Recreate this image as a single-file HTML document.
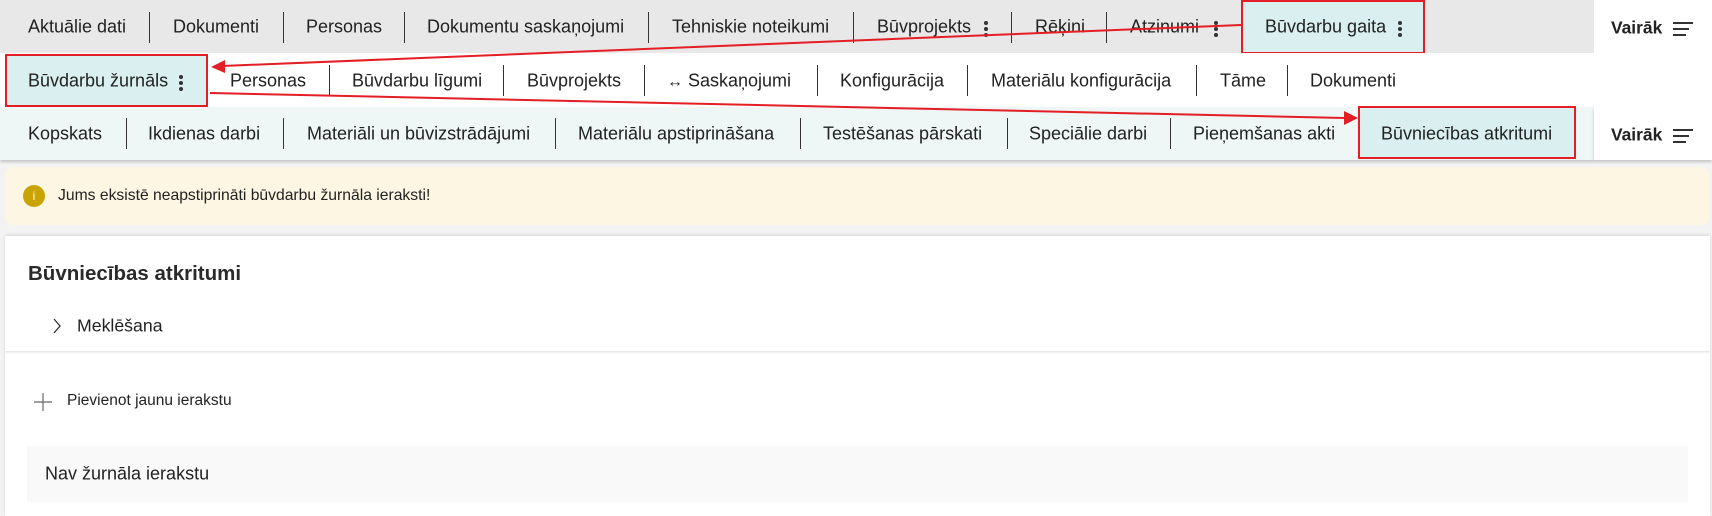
<!DOCTYPE html>
<html><head><meta charset="utf-8"><style>
*{margin:0;padding:0;box-sizing:border-box}
body{width:1712px;height:511px;background:#f3f3f3;position:relative;overflow:hidden;font-family:"Liberation Sans",Arial,sans-serif;color:#222}
.row{position:absolute;left:0;width:1712px}
.t{position:absolute;font-size:18px;white-space:nowrap;transform:translateY(-50%);color:#222}
.s{position:absolute;width:1px;height:31px;background:#333}
.dots{position:absolute;width:4px;height:16px;transform:translateY(-50%)}
.dots i{display:block;width:4px;height:4px;border-radius:50%;background:#333;margin-bottom:2px}
.ham{position:absolute}
.ham i{display:block;height:1.6px;background:#333;margin-bottom:4.5px}
.box{position:absolute;border:2px solid #e31e24;background:#d9eff0}
</style></head><body>
<div class="row" style="top:0;height:53px;background:#e8e8e8"></div>
<div style="position:absolute;left:1594px;top:0;width:118px;height:53px;background:#fff"></div>
<div class="box" style="left:1241px;top:0;width:184px;height:54px"></div>
<div class="row" style="top:53px;height:54px;background:#fff"></div>
<div class="box" style="left:5px;top:54px;width:203px;height:53px"></div>
<div class="row" style="top:107px;height:53px;background:#eef6f6;width:1594px;box-shadow:0 2px 3px rgba(0,0,0,.2)"></div>
<div style="position:absolute;left:1594px;top:107px;width:118px;height:53px;background:#fff;box-shadow:0 2px 3px rgba(0,0,0,.2)"></div>
<div class="box" style="left:1358px;top:106px;width:218px;height:53px"></div>

<div class="t" style="left:28px;top:27px">Aktuālie dati</div><div class="s" style="left:149px;top:12px"></div>
<div class="t" style="left:173px;top:27px">Dokumenti</div><div class="s" style="left:283px;top:12px"></div>
<div class="t" style="left:306px;top:27px">Personas</div><div class="s" style="left:404px;top:12px"></div>
<div class="t" style="left:427px;top:27px">Dokumentu saskaņojumi</div><div class="s" style="left:648px;top:12px"></div>
<div class="t" style="left:672px;top:27px">Tehniskie noteikumi</div><div class="s" style="left:853px;top:12px"></div>
<div class="t" style="left:877px;top:27px">Būvprojekts</div><div class="dots" style="left:984px;top:29px"><i></i><i></i><i></i></div><div class="s" style="left:1011px;top:12px"></div>
<div class="t" style="left:1035px;top:27px">Rēķini</div><div class="s" style="left:1106px;top:12px"></div>
<div class="t" style="left:1130px;top:27px">Atzinumi</div><div class="dots" style="left:1214px;top:29px"><i></i><i></i><i></i></div>
<div class="t" style="left:1265px;top:27px">Būvdarbu gaita</div><div class="dots" style="left:1398px;top:29px"><i></i><i></i><i></i></div>
<div class="t" style="left:1611px;top:28px;font-weight:bold;font-size:17.4px">Vairāk</div>
<div class="ham" style="left:1673px;top:22px"><i style="width:20px"></i><i style="width:16px"></i><i style="width:13px"></i></div>

<div class="t" style="left:28px;top:81px">Būvdarbu žurnāls</div><div class="dots" style="left:179px;top:83px"><i></i><i></i><i></i></div>
<div class="t" style="left:230px;top:81px">Personas</div><div class="s" style="left:329px;top:65px"></div>
<div class="t" style="left:352px;top:81px">Būvdarbu līgumi</div><div class="s" style="left:503px;top:65px"></div>
<div class="t" style="left:527px;top:81px">Būvprojekts</div><div class="s" style="left:644px;top:65px"></div>
<div class="t" style="left:667px;top:81px"><span style="font-size:16px">↔</span> Saskaņojumi</div><div class="s" style="left:817px;top:65px"></div>
<div class="t" style="left:840px;top:81px">Konfigurācija</div><div class="s" style="left:967px;top:65px"></div>
<div class="t" style="left:991px;top:81px">Materiālu konfigurācija</div><div class="s" style="left:1196px;top:65px"></div>
<div class="t" style="left:1220px;top:81px">Tāme</div><div class="s" style="left:1287px;top:65px"></div>
<div class="t" style="left:1310px;top:81px">Dokumenti</div>

<div class="t" style="left:28px;top:134px">Kopskats</div><div class="s" style="left:126px;top:118px"></div>
<div class="t" style="left:148px;top:134px">Ikdienas darbi</div><div class="s" style="left:283px;top:118px"></div>
<div class="t" style="left:307px;top:134px">Materiāli un būvizstrādājumi</div><div class="s" style="left:555px;top:118px"></div>
<div class="t" style="left:578px;top:134px">Materiālu apstiprināšana</div><div class="s" style="left:800px;top:118px"></div>
<div class="t" style="left:823px;top:134px">Testēšanas pārskati</div><div class="s" style="left:1007px;top:118px"></div>
<div class="t" style="left:1029px;top:134px">Speciālie darbi</div><div class="s" style="left:1170px;top:118px"></div>
<div class="t" style="left:1193px;top:134px">Pieņemšanas akti</div>
<div class="t" style="left:1381px;top:134px">Būvniecības atkritumi</div>
<div class="t" style="left:1611px;top:135px;font-weight:bold;font-size:17.4px">Vairāk</div>
<div class="ham" style="left:1673px;top:129px"><i style="width:20px"></i><i style="width:16px"></i><i style="width:13px"></i></div>

<svg style="position:absolute;left:0;top:0" width="1712" height="170">
<line x1="1241" y1="25" x2="222" y2="66" stroke="#e31e24" stroke-width="2"/>
<polygon points="211,67 225,60 225,73" fill="#e31e24"/>
<line x1="210" y1="93" x2="1345" y2="118" stroke="#e31e24" stroke-width="2"/>
<polygon points="1358,118 1344,111 1344,125" fill="#e31e24"/>
</svg>

<div style="position:absolute;left:5px;top:167px;width:1704px;height:58px;background:#fdf6e3;border-radius:8px"></div>
<div style="position:absolute;left:23px;top:185px;width:22px;height:22px;border-radius:50%;background:#c9a400;color:#fff;font-size:12px;text-align:center;line-height:22px">i</div>
<div class="t" style="left:58px;top:196px;font-size:15.7px">Jums eksistē neapstiprināti būvdarbu žurnāla ieraksti!</div>

<div style="position:absolute;left:5px;top:236px;width:1705px;height:280px;background:#fff;box-shadow:0 -1px 3px rgba(0,0,0,.12)"></div>
<div class="t" style="left:28px;top:274px;font-size:20.5px;font-weight:bold;color:#2a2a2a">Būvniecības atkritumi</div>
<svg style="position:absolute;left:52px;top:318px" width="10" height="16"><path d="M2 1 L8 8 L2 15" fill="none" stroke="#333" stroke-width="1.3"/></svg>
<div class="t" style="left:77px;top:326px;font-size:17.7px">Meklēšana</div>
<div style="position:absolute;left:5px;top:351px;width:1705px;height:3px;background:linear-gradient(#e6e6e6,#fff)"></div>
<svg style="position:absolute;left:33px;top:392px" width="20" height="20"><path d="M10 1V19M1 10H19" stroke="#666" stroke-width="1.2"/></svg>
<div class="t" style="left:67px;top:401px;font-size:15.5px">Pievienot jaunu ierakstu</div>
<div style="position:absolute;left:27px;top:446px;width:1661px;height:56px;background:#f9f9f9"></div>
<div class="t" style="left:45px;top:474px;font-size:18px">Nav žurnāla ierakstu</div>
</body></html>
